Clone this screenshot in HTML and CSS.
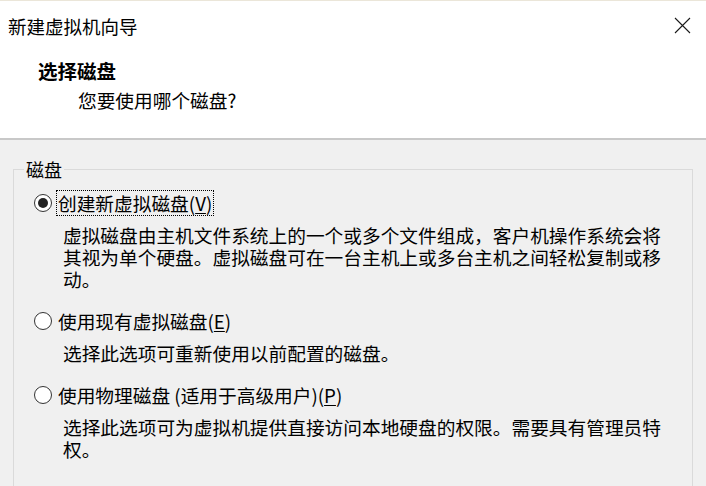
FILE: index.html
```html
<!DOCTYPE html>
<html lang="zh-CN">
<head>
    <meta charset="UTF-8">
    <meta name="viewport" content="width=device-width, initial-scale=1.0">
    <title>新建虚拟机向导</title>
    <link rel="stylesheet" href="styles.css">
</head>
<body>
    <header class="wizard-header">
        <div class="titlebar">
            <div class="window-title">新建虚拟机向导</div>
            <button class="close-btn" aria-label="关闭">
                <svg width="17" height="17" viewBox="0 0 17 17">
                    <path d="M1 1 L16 16 M16 1 L1 16" stroke="#1a1a1a" stroke-width="1.1" fill="none"/>
                </svg>
            </button>
        </div>
        <h1 class="step-title">选择磁盘</h1>
        <p class="step-subtitle">您要使用哪个磁盘?</p>
    </header>

    <main class="wizard-body">
        <fieldset class="group-box">
            <legend>磁盘</legend>

            <div class="option">
                <div class="option-row is-focused">
                    <span class="radio checked"></span>
                    <span class="option-label">创建新虚拟磁盘(<u>V</u>)</span>
                </div>
                <p class="option-desc">虚拟磁盘由主机文件系统上的一个或多个文件组成，客户机操作系统会将其视为单个硬盘。虚拟磁盘可在一台主机上或多台主机之间轻松复制或移动。</p>
            </div>

            <div class="option">
                <div class="option-row">
                    <span class="radio"></span>
                    <span class="option-label">使用现有虚拟磁盘(<u>E</u>)</span>
                </div>
                <p class="option-desc">选择此选项可重新使用以前配置的磁盘。</p>
            </div>

            <div class="option">
                <div class="option-row">
                    <span class="radio"></span>
                    <span class="option-label">使用物理磁盘 (适用于高级用户)(<u>P</u>)</span>
                </div>
                <p class="option-desc">选择此选项可为虚拟机提供直接访问本地硬盘的权限。需要具有管理员特权。</p>
            </div>
        </fieldset>
    </main>
</body>
</html>
```

FILE: styles.css
```css
body {
    font-family: "Noto Sans CJK SC", sans-serif;
    font-size: 18.7px;
    color: #000000;
    background-color: #f0f0f0;
    margin: 0;
    padding: 0;
    height: 486px;
    overflow: hidden;
}

.wizard-header {
    background-color: #ffffff;
    height: 137px;
    border-top: 1px solid #ebe6d9;
    border-bottom: 2px solid #c8c8c8;
    box-sizing: content-box;
}

.titlebar {
    height: 49px;
    display: flex;
    justify-content: space-between;
    align-items: center;
    padding: 0 15px 0 8px;
}

.window-title {
    font-size: 18.5px;
    line-height: 24px;
}

.close-btn {
    border: none;
    background: none;
    padding: 0;
    width: 18px;
    height: 18px;
    display: flex;
    align-items: center;
    justify-content: center;
}

.step-title {
    font-size: 19.5px;
    font-weight: bold;
    line-height: 24px;
    margin: 9px 0 0 38px;
}

.step-subtitle {
    line-height: 24px;
    margin: 5px 0 0 78px;
}

.wizard-body {
    padding-top: 18px;
}

.group-box {
    margin: 0 13px;
    padding: 0 0 40px 0;
    border: 1px solid #dadada;
}

.group-box legend {
    font-size: 18px;
    line-height: 22px;
    padding: 0 2px;
    margin-left: 10px;
}

.option {
    margin-top: 18px;
    padding-left: 20px;
}

.option:first-of-type {
    margin-top: 10px;
}

.option-row {
    display: flex;
    align-items: center;
    height: 26px;
}

.option-row.is-focused {
    margin-bottom: 3px;
}

.option-row.is-focused .option-label {
    outline: 1px dotted #000000;
    outline-offset: 0;
}

.radio {
    flex: none;
    width: 18px;
    height: 18px;
    box-sizing: border-box;
    border: 1.5px solid #333333;
    border-radius: 50%;
    background-color: #ffffff;
    display: flex;
    align-items: center;
    justify-content: center;
    margin-right: 5px;
}

.radio.checked::after {
    content: "";
    width: 10px;
    height: 10px;
    border-radius: 50%;
    background-color: #222222;
}

.option-label {
    line-height: 24px;
    padding: 0 1px;
}

.option-label u {
    text-underline-offset: 2px;
}

.option-desc {
    margin: 8px 0 0 29px;
    line-height: 22px;
    max-width: 606px;
}
```
